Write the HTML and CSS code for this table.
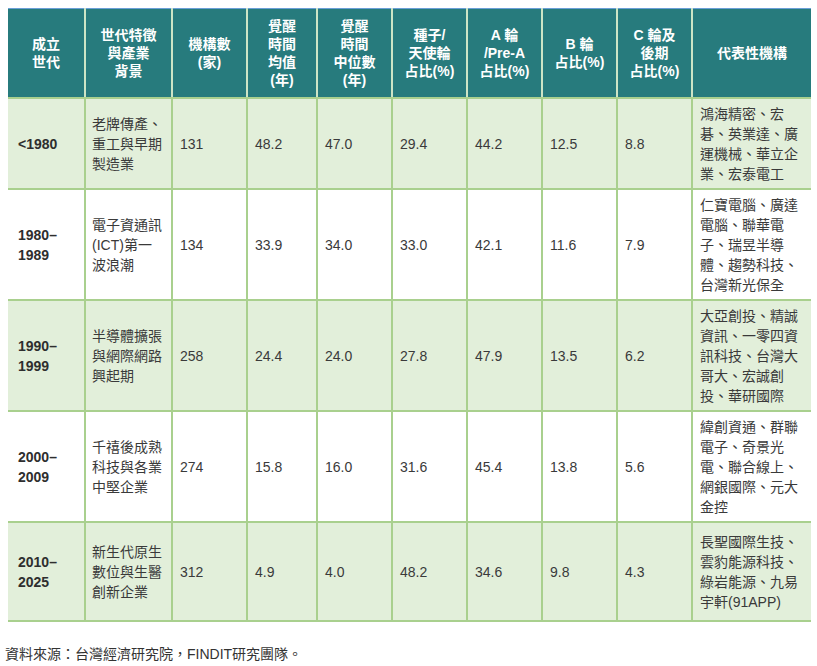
FILE: index.html
```html
<!DOCTYPE html>
<html lang="zh-Hant">
<head>
<meta charset="utf-8">
<title>世代與募資輪次</title>
<link rel="stylesheet" href="styles.css">
</head>
<body>
<div class="page">
  <table class="gen-table">
    <colgroup>
      <col class="c-gen"><col class="c-desc"><col class="c-num"><col class="c-mean">
      <col class="c-num"><col class="c-num"><col class="c-num"><col class="c-num">
      <col class="c-num"><col class="c-org">
    </colgroup>
    <thead>
      <tr>
        <th>成立<br>世代</th>
        <th>世代特徵<br>與產業<br>背景</th>
        <th>機構數<br>(家)</th>
        <th>覺醒<br>時間<br>均值<br>(年)</th>
        <th>覺醒<br>時間<br>中位數<br>(年)</th>
        <th>種子/<br>天使輪<br>占比(%)</th>
        <th>A 輪<br>/Pre-A<br>占比(%)</th>
        <th>B 輪<br>占比(%)</th>
        <th>C 輪及<br>後期<br>占比(%)</th>
        <th>代表性機構</th>
      </tr>
    </thead>
    <tbody>
      <tr class="shaded">
        <td class="gen">&lt;1980</td>
        <td class="desc">老牌傳產、<br>重工與早期<br>製造業</td>
        <td>131</td><td>48.2</td><td>47.0</td><td>29.4</td><td>44.2</td><td>12.5</td><td>8.8</td>
        <td class="org">鴻海精密、宏<br>碁、英業達、廣<br>運機械、華立企<br>業、宏泰電工</td>
      </tr>
      <tr>
        <td class="gen">1980–<br>1989</td>
        <td class="desc">電子資通訊<br>(ICT)第一<br>波浪潮</td>
        <td>134</td><td>33.9</td><td>34.0</td><td>33.0</td><td>42.1</td><td>11.6</td><td>7.9</td>
        <td class="org">仁寶電腦、廣達<br>電腦、聯華電<br>子、瑞昱半導<br>體、趨勢科技、<br>台灣新光保全</td>
      </tr>
      <tr class="shaded">
        <td class="gen">1990–<br>1999</td>
        <td class="desc">半導體擴張<br>與網際網路<br>興起期</td>
        <td>258</td><td>24.4</td><td>24.0</td><td>27.8</td><td>47.9</td><td>13.5</td><td>6.2</td>
        <td class="org">大亞創投、精誠<br>資訊、一零四資<br>訊科技、台灣大<br>哥大、宏誠創<br>投、華研國際</td>
      </tr>
      <tr>
        <td class="gen">2000–<br>2009</td>
        <td class="desc">千禧後成熟<br>科技與各業<br>中堅企業</td>
        <td>274</td><td>15.8</td><td>16.0</td><td>31.6</td><td>45.4</td><td>13.8</td><td>5.6</td>
        <td class="org">緯創資通、群聯<br>電子、奇景光<br>電、聯合線上、<br>網銀國際、元大<br>金控</td>
      </tr>
      <tr class="shaded last">
        <td class="gen">2010–<br>2025</td>
        <td class="desc">新生代原生<br>數位與生醫<br>創新企業</td>
        <td>312</td><td>4.9</td><td>4.0</td><td>48.2</td><td>34.6</td><td>9.8</td><td>4.3</td>
        <td class="org">長聖國際生技、<br>雲豹能源科技、<br>綠岩能源、九易<br>宇軒(91APP)</td>
      </tr>
    </tbody>
  </table>
  <p class="source">資料來源：台灣經濟研究院，FINDIT研究團隊。</p>
</div>
</body>
</html>
```

FILE: styles.css
```css
html, body {
  margin: 0;
  padding: 0;
  background: #ffffff;
}

body {
  font-family: "Liberation Sans", "Noto Sans CJK TC", sans-serif;
  font-size: 14px;
  color: #3a3a3a;
}

.page {
  padding: 8px 0 0 5px;
}

.gen-table {
  margin-left: 3px;
  width: 803px;
  table-layout: fixed;
  border-collapse: collapse;
  border-top: 1px solid #6a9fd6;
  border-bottom: 2px solid #a9d08e;
}

.c-gen { width: 77px; }
.c-desc { width: 87px; }
.c-num { width: 75px; }
.c-mean { width: 70px; }
.c-org { width: 119px; }

.gen-table th {
  background: #277b7d;
  color: #ffffff;
  font-weight: bold;
  line-height: 18px;
  padding: 8px 4px;
  text-align: center;
  vertical-align: middle;
  border-left: 2px solid #cde5c6;
  border-right: 2px solid #cde5c6;
  border-bottom: 2px solid #a9d08e;
}

.gen-table th:first-child { border-left: none; }
.gen-table th:last-child { border-right: none; }

.gen-table td {
  line-height: 20px;
  padding: 5px 7px 4px 7px;
  text-align: left;
  vertical-align: middle;
  border: 2px solid #a9d08e;
}

.gen-table td:first-child { border-left: none; }
.gen-table td:last-child { border-right: none; }

.gen-table tr.shaded td {
  background: #e2efda;
}

.gen-table tr.last td {
  padding-top: 9px;
  padding-bottom: 8px;
}

.gen-table td.gen {
  font-weight: bold;
  color: #2e2e2e;
  padding-left: 10px;
}

.gen-table td.desc {
  padding-left: 6px;
  padding-right: 4px;
}

.source {
  margin: 22px 0 0 0;
  font-size: 14px;
  line-height: 20px;
  color: #333333;
}
```
